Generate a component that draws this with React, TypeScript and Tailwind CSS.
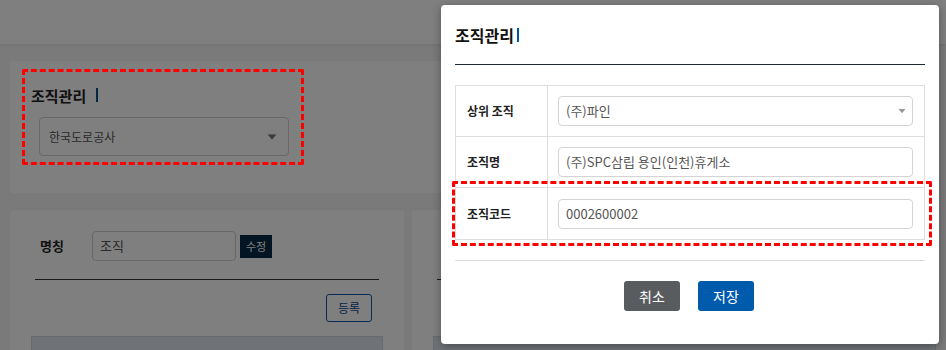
import React from 'react';

const font = "font-['Noto_Sans_CJK_KR','Noto_Sans',sans-serif]";

function Caret({ className = '' }: { className?: string }) {
  return (
    <svg width="10" height="6" viewBox="0 0 10 6" className={className}>
      <path d="M0 0 L10 0 L5 6 Z" fill="currentColor" />
    </svg>
  );
}

function FormRow({ label, children, last }: { label: string; children: React.ReactNode; last?: boolean }) {
  return (
    <div className={`flex h-[51px] ${last ? '' : 'border-b border-[#dddddd]'}`}>
      <div className="w-[92px] shrink-0 border-r border-[#dddddd] flex items-center pl-[11px] text-[12px] font-bold text-[#222]">
        {label}
      </div>
      <div className="flex-1 flex items-center pl-[10px] pr-[11px]">{children}</div>
    </div>
  );
}

export default function App() {
  return (
    <div className={`relative w-full h-[350px] overflow-hidden bg-[#f4f4f4] ${font}`}>
      {/* Page behind the dialog */}
      <div className="h-[44px] bg-white shadow-[0_1px_3px_rgba(0,0,0,0.08)]" />
      <div className="px-[10px] pt-[17px]">
        {/* Org selector card */}
        <div className="relative h-[132px] rounded-[4px] bg-white px-[21px] pt-[24px]">
          <div className="flex items-center gap-[10px] h-[20px]">
            <span className="text-[15px] font-bold text-[#222] leading-none">조직관리</span>
            <span className="w-[2px] h-[14px] bg-[#0a4f8f]" />
          </div>
          <div className="mt-[12px] ml-[8px] w-[250px] h-[39px] rounded-[4px] border border-[#cfcfcf] flex items-center justify-between pl-[9px] pr-[11px]">
            <span className="text-[12px] text-[#555]">한국도로공사</span>
            <Caret className="text-[#777] scale-90" />
          </div>
        </div>

        <div className="flex gap-[8px] mt-[17px]">
          {/* Left card */}
          <div className="w-[394px] shrink-0 h-[200px] rounded-[4px] bg-white pt-[21px]">
            <div className="px-[25px]">
              <div className="flex items-center h-[30px]">
                <span className="w-[57px] pl-[5px] text-[13px] font-bold text-[#222]">명칭</span>
                <div className="w-[144px] h-[30px] rounded-[4px] border border-[#cfcfcf] flex items-center pl-[7px] text-[13px] text-[#555]">
                  조직
                </div>
                <div className="ml-[4px] w-[32px] h-[23px] bg-[#062a44] text-white text-[11px] flex items-center justify-center">
                  수정
                </div>
              </div>
              <div className="mt-[18px] border-t border-[#333]" />
              <div className="flex justify-end pr-[7px] mt-[14px]">
                <div className="w-[46px] h-[28px] rounded-[3px] border border-[#0a5aa8] text-[#0a4a8a] text-[12px] flex items-center justify-center">
                  등록
                </div>
              </div>
            </div>
            <div className="mx-[21px] mt-[14px] h-[40px] bg-[#dfe7ef] border border-[#d0d6dc]" />
          </div>
          {/* Right card */}
          <div className="flex-1 h-[200px] rounded-[4px] bg-white pt-[69px]">
            <div className="ml-[25px] border-t border-[#333]" />
            <div className="ml-[21px] mt-[56px] h-[40px] bg-[#dfe7ef] border border-[#d0d6dc]" />
          </div>
        </div>
      </div>

      {/* Dim overlay */}
      <div className="absolute inset-0 bg-black/50" />

      {/* annotation on background */}
      <div className="absolute left-[22px] top-[69px] w-[282px] h-[96px] border-[3px] border-dashed border-[#ff0000] rounded-[2px]" />

      {/* Dialog */}
      <div className="absolute left-[441px] top-[5px] w-[498px] h-[339px] rounded-[4px] bg-white shadow-[0_2px_8px_rgba(0,0,0,0.35)] px-[14px] pt-[19px]">
        <div className="flex items-center gap-[3px] h-[22px]">
          <span className="text-[16px] font-bold text-[#111] leading-none">조직관리</span>
          <span className="w-[2px] h-[14px] bg-[#0057a8]" />
        </div>
        <div className="mt-[18px] border-t border-[#1e2a36]" />

        <div className="mt-[20px] border border-[#dddddd]">
          <FormRow label="상위 조직">
            <div className="w-full h-[30px] rounded-[4px] border border-[#d4d4d4] flex items-center justify-between pl-[7px] pr-[5px] text-[13px] text-[#555]">
              <span>(주)파인</span>
              <Caret className="text-[#999] scale-75" />
            </div>
          </FormRow>
          <FormRow label="조직명">
            <div className="w-full h-[30px] rounded-[4px] border border-[#d4d4d4] flex items-center pl-[7px] text-[13px] text-[#555]">
              (주)SPC삼립 용인(인천)휴게소
            </div>
          </FormRow>
          <FormRow label="조직코드" last>
            <div className="w-full h-[30px] rounded-[4px] border border-[#d4d4d4] flex items-center pl-[7px] text-[13px] text-[#555]">
              0002600002
            </div>
          </FormRow>
        </div>

        <div className="mt-[20px] border-t border-[#dddddd]" />

        <div className="flex justify-center gap-[18px] mt-[20px] pr-[2px]">
          <div className="w-[56px] h-[30px] rounded-[3px] bg-[#595c5f] text-white text-[14px] flex items-center justify-center">
            취소
          </div>
          <div className="w-[56px] h-[30px] rounded-[3px] bg-[#005bac] text-white text-[14px] flex items-center justify-center">
            저장
          </div>
        </div>
      </div>

      {/* annotation on dialog */}
      <div className="absolute left-[452px] top-[181px] w-[480px] h-[65px] border-[3px] border-dashed border-[#ff0000] rounded-[2px]" />
    </div>
  );
}
